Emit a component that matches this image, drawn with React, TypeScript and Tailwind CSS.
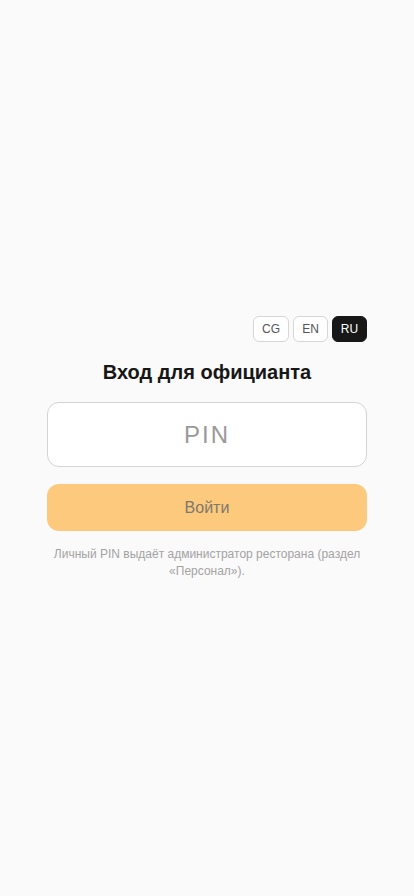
import React from "react";

export default function App() {
  return (
    <div className="min-h-screen w-full bg-[#fafafa] flex items-center justify-center" style={{ fontFamily: '"Liberation Sans", Arial, sans-serif' }}>
      <div className="w-[320px] flex flex-col">
        <div className="flex justify-end gap-[4px] h-[26px]">
          <button className="w-[36px] h-[26px] rounded-[6px] border border-[#d6d6d6] bg-white text-[12px] text-[#555]">CG</button>
          <button className="w-[35px] h-[26px] rounded-[6px] border border-[#d6d6d6] bg-white text-[12px] text-[#555]">EN</button>
          <button className="w-[35px] h-[26px] rounded-[6px] border border-[#171717] bg-[#171717] text-[12px] text-white">RU</button>
        </div>
        <h1 className="mt-[16px] text-center text-[20px] leading-[28px] font-bold text-[#171717]">Вход для официанта</h1>
        <input
          className="mt-[16px] h-[65px] w-full rounded-[12px] border border-[#d4d4d4] bg-white text-center text-[24px] tracking-[2px] text-[#333] placeholder:text-[#9a9a9a] outline-none"
          placeholder="PIN"
        />
        <button disabled className="mt-[17px] h-[47px] w-full rounded-[12px] bg-[#fdc97d] text-[16px] text-[#7e786d]">Войти</button>
        <p className="mt-[15px] text-center text-[12px] leading-[17px] text-[#a3a3a3] px-[4px]">Личный PIN выдаёт администратор ресторана (раздел «Персонал»).</p>
      </div>
    </div>
  );
}
